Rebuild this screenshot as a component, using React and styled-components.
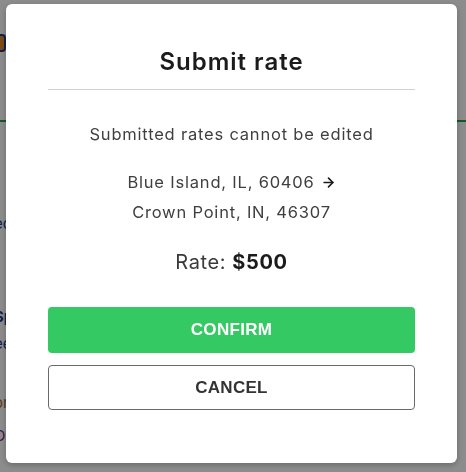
import React from 'react'
import styled, { createGlobalStyle } from 'styled-components'
import { ArrowRight } from 'lucide-react'

const Global = createGlobalStyle`
  html, body {
    margin: 0;
    padding: 0;
    background: #fff;
    font-family: Inter, "Noto Sans", sans-serif;
    overflow: hidden;
  }
`

// page behind the dialog, only its left edge shows
const Page = styled.div`
  width: 466px;
  height: 472px;
  background: #fff;
`

const TopBar = styled.div`
  height: 120px;
  border-bottom: 2px solid #1fa64a;
  display: flex;
  align-items: center;
`

const Badge = styled.div`
  margin-left: -14px;
  width: 16px;
  height: 14px;
  margin-top: -34px;
  border: 2px solid #1f3a8a;
  border-radius: 4px;
  background: #e08a2c;
`

const Side = styled.div`
  display: flex;
  flex-direction: column;
  padding-top: 92px;
  gap: 14px;
`

const SideLine = styled.div`
  margin-left: -6px;
  font-size: 15px;
  font-weight: ${p => (p.$bold ? 700 : 400)};
  color: ${p => p.$color};
  margin-top: ${p => p.$top || 0}px;
  white-space: nowrap;
`

const Overlay = styled.div`
  position: fixed;
  inset: 0;
  background: rgba(0, 0, 0, 0.45);
  display: flex;
  justify-content: center;
  align-items: flex-start;
`

const Dialog = styled.div`
  margin-top: 4px;
  margin-left: -3px;
  width: 451px;
  height: 459px;
  box-sizing: border-box;
  background: #fff;
  border-radius: 6px;
  box-shadow: 0 2px 6px rgba(0, 0, 0, 0.25);
  padding: 0 42px 53px;
  display: flex;
  flex-direction: column;
  align-items: stretch;
  text-align: center;
`

const Header = styled.div`
  padding: 42px 0 11px;
  border-bottom: 1px solid #d2d2d2;
`

const Title = styled.h2`
  margin: 0;
  font-size: 24px;
  line-height: 32px;
  font-weight: 600;
  color: #1b1b1b;
  letter-spacing: 1px;
`

const Note = styled.p`
  margin: 33px 0 0;
  font-size: 16.5px;
  line-height: 22px;
  color: #3f3f3f;
  letter-spacing: 0.8px;
`

const Route = styled.div`
  margin-top: 22px;
  font-size: 16.5px;
  line-height: 30px;
  color: #3f3f3f;
  letter-spacing: 0.8px;
`

const Stop = styled.div`
  display: flex;
  justify-content: center;
  align-items: center;
  gap: 6px;
`

const Rate = styled.div`
  margin-top: 21px;
  font-size: 20px;
  line-height: 28px;
  color: #3a3a3a;
  letter-spacing: 0.6px;

  strong {
    font-weight: 700;
    color: #1b1b1b;
  }
`

const Button = styled.button`
  display: block;
  width: 100%;
  box-sizing: border-box;
  height: ${p => (p.$primary ? 46 : 45)}px;
  margin-top: ${p => p.$top}px;
  border-radius: 4px;
  border: ${p => (p.$primary ? 'none' : '1px solid #6a6a6a')};
  background: ${p => (p.$primary ? '#35c964' : '#fff')};
  color: ${p => (p.$primary ? '#fff' : '#333')};
  font-family: "Liberation Sans", Arial, sans-serif;
  font-weight: 700;
  font-size: 17px;
  letter-spacing: 0.3px;
  cursor: pointer;
`

export default function App() {
  return (
    <>
      <Global />
      <Page>
        <TopBar>
          <Badge />
        </TopBar>
        <Side>
          <SideLine $color="#1f3a8a">ec</SideLine>
          <SideLine $color="#1f3a8a" $bold $top={60}>Sp</SideLine>
          <SideLine $color="#1f3a8a" $top={-6}>ee</SideLine>
          <SideLine $color="#9a6a1c" $top={26}>or</SideLine>
          <SideLine $color="#7a2a8a" $top={0}>OC</SideLine>
        </Side>
      </Page>
      <Overlay>
        <Dialog>
          <Header>
            <Title>Submit rate</Title>
          </Header>
          <Note>Submitted rates cannot be edited</Note>
          <Route>
            <Stop>
              Blue Island, IL, 60406
              <ArrowRight size={15} strokeWidth={2.6} color="#1b1b1b" />
            </Stop>
            <Stop>Crown Point, IN, 46307</Stop>
          </Route>
          <Rate>
            Rate: <strong>$500</strong>
          </Rate>
          <Button $primary $top={31}>CONFIRM</Button>
          <Button $top={12}>CANCEL</Button>
        </Dialog>
      </Overlay>
    </>
  )
}
